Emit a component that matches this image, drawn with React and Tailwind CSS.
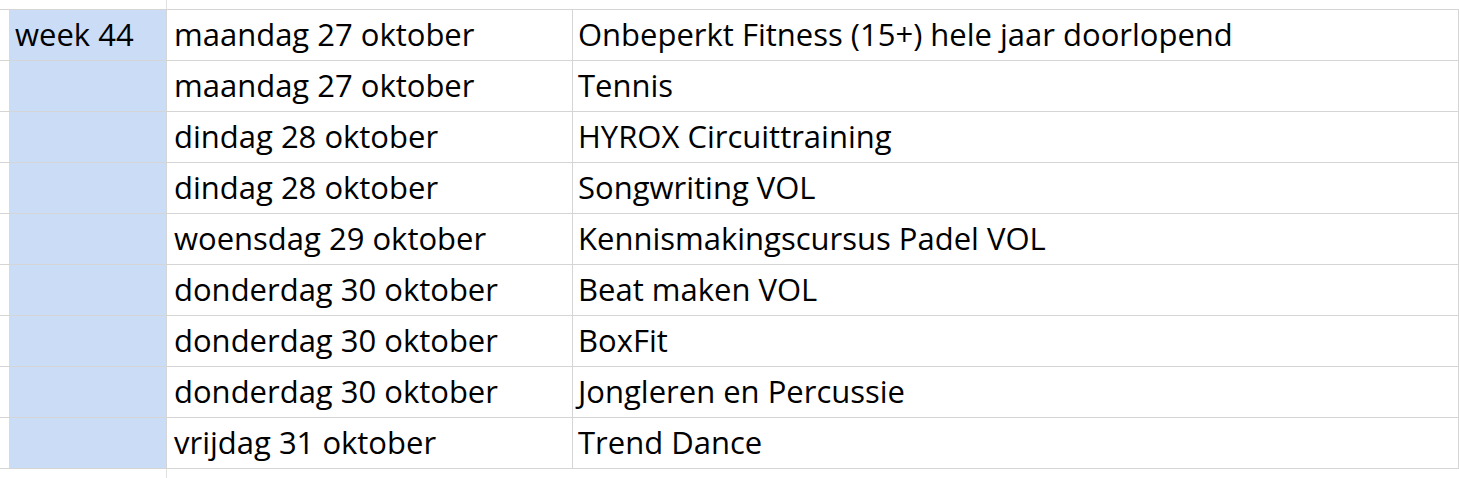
import React from "react";

const rows = [
  ["maandag 27 oktober", "Onbeperkt Fitness (15+) hele jaar doorlopend"],
  ["maandag 27 oktober", "Tennis"],
  ["dindag 28 oktober", "HYROX Circuittraining"],
  ["dindag 28 oktober", "Songwriting VOL"],
  ["woensdag 29 oktober", "Kennismakingscursus Padel VOL"],
  ["donderdag 30 oktober", "Beat maken VOL"],
  ["donderdag 30 oktober", "BoxFit"],
  ["donderdag 30 oktober", "Jongleren en Percussie"],
  ["vrijdag 31 oktober", "Trend Dance"],
];

const App = () => {
  return (
    <div className="w-[1459px] h-[478px] overflow-hidden bg-white text-black font-['Open_Sans',sans-serif] text-[31px] leading-none">
      {/* strip above the table */}
      <div className="flex h-[9px]">
        <div className="w-[166px]" />
        <div className="w-px bg-[#e1e1e1]" />
      </div>
      <div className="h-px bg-[#d5d5d5]" />

      {rows.map(([date, activity], i) => (
        <div key={i}>
          <div className="flex h-[50px]">
            <div className="w-[9px] shrink-0" />
            <div className="w-[157px] shrink-0 bg-[#cbdcf6] flex items-center pl-[6px] pb-[2px]">
              {i === 0 ? "week 44" : ""}
            </div>
            <div className="w-px shrink-0 bg-[#d5d5d5]" />
            <div className="w-[405px] shrink-0 flex items-center pl-[7px] pb-[2px] whitespace-nowrap">
              {date}
            </div>
            <div className="w-px shrink-0 bg-[#d5d5d5]" />
            <div className="w-[885px] shrink-0 flex items-center pl-[5px] pb-[2px] whitespace-nowrap">
              {activity}
            </div>
            <div className="w-px shrink-0 bg-[#d5d5d5]" />
          </div>
          <div className="h-px bg-[#d5d5d5]" />
        </div>
      ))}

      {/* strip below the table */}
      <div className="flex h-[9px]">
        <div className="w-[166px]" />
        <div className="w-px bg-[#e1e1e1]" />
      </div>
    </div>
  );
};

export default App;
